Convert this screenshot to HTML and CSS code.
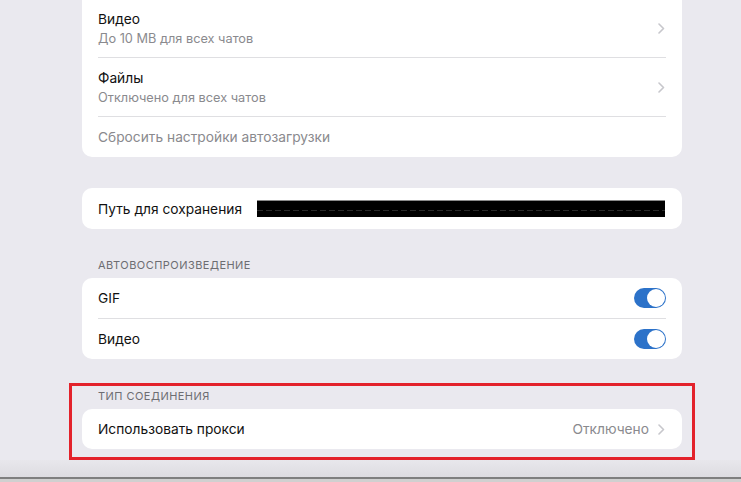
FILE: index.html
```html
<!DOCTYPE html>
<html lang="ru">
<head>
<meta charset="utf-8">
<link rel="stylesheet" href="styles.css">
</head>
<body>
<div class="page">
  <div class="card card-first">
    <div class="row row-two">
      <div class="texts">
        <div class="title">Видео</div>
        <div class="subtitle">До 10 MB для всех чатов</div>
      </div>
      <svg class="chev" width="7" height="11" viewBox="0 0 7 11"><path d="M1 1l4.5 4.5L1 10" fill="none" stroke="#c7c7cc" stroke-width="1.6" stroke-linecap="round" stroke-linejoin="round"/></svg>
    </div>
    <div class="row row-two">
      <div class="texts">
        <div class="title">Файлы</div>
        <div class="subtitle">Отключено для всех чатов</div>
      </div>
      <svg class="chev" width="7" height="11" viewBox="0 0 7 11"><path d="M1 1l4.5 4.5L1 10" fill="none" stroke="#c7c7cc" stroke-width="1.6" stroke-linecap="round" stroke-linejoin="round"/></svg>
    </div>
    <div class="row row-one">
      <div class="title muted">Сбросить настройки автозагрузки</div>
    </div>
  </div>

  <div class="card card-path">
    <div class="row row-path">
      <div class="title">Путь для сохранения</div>
      <div class="redacted"></div>
    </div>
  </div>

  <div class="section">
    <div class="header">Автовоспроизведение</div>
    <div class="card">
      <div class="row row-one">
        <div class="title">GIF</div>
        <div class="toggle"><span class="knob"></span></div>
      </div>
      <div class="row row-one">
        <div class="title">Видео</div>
        <div class="toggle"><span class="knob"></span></div>
      </div>
    </div>
  </div>

  <div class="section highlighted">
    <div class="header">Тип соединения</div>
    <div class="card">
      <div class="row row-one">
        <div class="title">Использовать прокси</div>
        <div class="value">Отключено</div>
        <svg class="chev" width="7" height="11" viewBox="0 0 7 11"><path d="M1 1l4.5 4.5L1 10" fill="none" stroke="#c7c7cc" stroke-width="1.6" stroke-linecap="round" stroke-linejoin="round"/></svg>
      </div>
    </div>
  </div>
</div>
<div class="bottom-edge"></div>
</body>
</html>
```
FILE: styles.css
```css
* { box-sizing: border-box; }
html, body { margin: 0; padding: 0; }
body {
  background: #eae9ef;
  font-family: Inter, "Liberation Sans", Arial, sans-serif;
  color: #111;
  width: 741px;
  height: 482px;
  overflow: hidden;
  display: flex;
  flex-direction: column;
}
.page {
  width: 600px;
  margin-left: 82px;
  margin-top: -11px;
  flex: 1;
}
.card {
  background: #fff;
  border-radius: 10px;
  padding: 0 16px;
}
.card-first { padding-top: 10px; }
.card-path { margin-top: 31px; }
.row {
  display: flex;
  align-items: center;
  border-bottom: 1px solid #dfdfe2;
}
.row:last-child { border-bottom: none; }
.row-two { height: 59px; }
.row-one { height: 41px; }
.card .row-one:last-child { height: 40px; }
.row-path { height: 41px; }
.texts {
  flex: 1;
  display: flex;
  flex-direction: column;
  gap: 3px;
  padding-top: 1px;
}
.title {
  font-size: 13.75px;
  line-height: 18px;
  flex: 1;
}
.muted { color: #8a8a8e; }
.subtitle {
  font-size: 12.75px;
  line-height: 16px;
  color: #8a8a8e;
}
.chev { flex: none; margin-right: 1px; }
.redacted {
  flex: none;
  width: 408px;
  height: 17px;
  border-top: 1px solid #8a8a8a;
  margin-right: 1px;
  background-image: repeating-linear-gradient(90deg, #2a2a2a 0 6px, transparent 6px 9px);
  background-size: 100% 1px;
  background-position: 0 9px;
  background-repeat: no-repeat;
  background-color: #000;
}
.section { margin-top: 27px; }
.header {
  height: 22px;
  padding: 0 16px 6px;
  display: flex;
  align-items: flex-end;
  font-size: 11px;
  line-height: 14px;
  letter-spacing: 0.46px;
  text-transform: uppercase;
  color: #6d6d72;
}
.toggle {
  flex: none;
  width: 32px;
  height: 20px;
  border-radius: 10px;
  background: #2c72c9;
  display: flex;
  justify-content: flex-end;
  align-items: center;
  padding-right: 1px;
}
.knob {
  width: 18px;
  height: 18px;
  border-radius: 50%;
  background: #fff;
}
.value {
  font-size: 13.75px;
  color: #8a8a8e;
  margin-right: 9px;
}
.highlighted {
  margin: 24px -13px 0;
  border: 3px solid #e3222b;
  padding: 0 10px 8px;
}
.highlighted .header { height: 23px; }
.bottom-edge {
  height: 22px;
  flex: none;
  background: linear-gradient(#e8e7ec 0, #dddce1 17px, #7f7f7f 17px, #7f7f7f 19px, #d0d0d0 19px);
}
```
